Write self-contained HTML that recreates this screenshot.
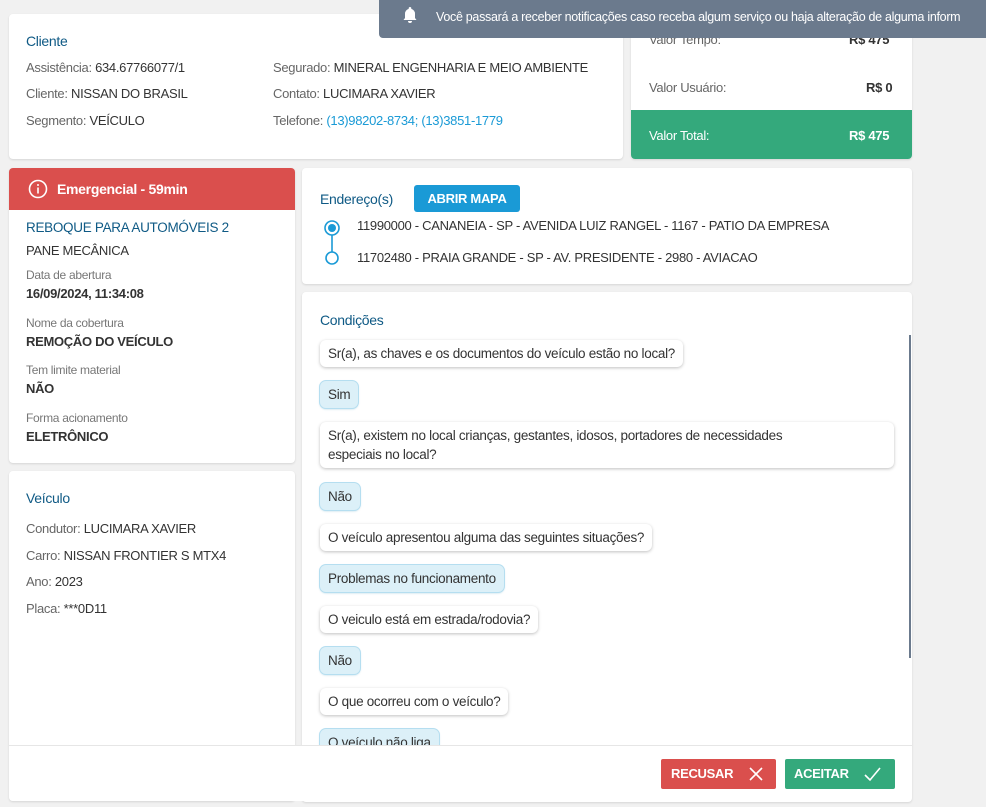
<!DOCTYPE html>
<html><head><meta charset="utf-8"><style>
*{margin:0;padding:0;box-sizing:border-box}
body{width:986px;height:807px;background:#f1f1f1;font-family:"Liberation Sans",sans-serif;font-size:13px;color:#333;position:relative;overflow:hidden;letter-spacing:-0.3px}
.a{position:absolute;white-space:nowrap}
.card{position:absolute;background:#fff;border-radius:4px;box-shadow:0 1px 2px rgba(0,0,0,.12)}
.lbl{color:#666}
.ttl{color:#0f5a85;font-size:14px}
.bub{position:absolute;background:#fff;border-radius:6px;box-shadow:0 1px 3px rgba(0,0,0,.25);padding:0 8px;line-height:27px;height:27px;white-space:nowrap;font-size:13.5px;color:#333}
.ans{background:#dcf0f8;box-shadow:0 0 0 1px #b5def0,0 1px 2px rgba(60,150,190,.4)}
.sm{font-size:12px;color:#777}
.b{font-weight:bold;color:#333}
</style></head><body>

<div class="card" style="left:9px;top:14px;width:614px;height:145px"></div>
<div class="a ttl" style="left:26px;top:33px">Cliente</div>
<div class="a" style="left:26px;top:60px"><span class="lbl">Assistência:</span> 634.67766077/1</div>
<div class="a" style="left:26px;top:86px"><span class="lbl">Cliente:</span> NISSAN DO BRASIL</div>
<div class="a" style="left:26px;top:113px"><span class="lbl">Segmento:</span> VEÍCULO</div>
<div class="a" style="left:273px;top:60px"><span class="lbl">Segurado:</span> MINERAL ENGENHARIA E MEIO AMBIENTE</div>
<div class="a" style="left:273px;top:86px"><span class="lbl">Contato:</span> LUCIMARA XAVIER</div>
<div class="a" style="left:273px;top:113px"><span class="lbl">Telefone:</span> <span style="color:#1a9ad6">(13)98202-8734; (13)3851-1779</span></div>

<div class="card" style="left:631px;top:14px;width:281px;height:145px;overflow:hidden">
<div style="position:absolute;left:0;top:96px;width:281px;height:49px;background:#34a97c"></div></div>
<div class="a lbl" style="left:649px;top:32px">Valor Tempo:</div>
<div class="a b" style="left:849px;top:32px">R$ 475</div>
<div class="a lbl" style="left:649px;top:80px">Valor Usuário:</div>
<div class="a b" style="left:866px;top:80px">R$ 0</div>
<div class="a" style="left:649px;top:128px;color:#fff">Valor Total:</div>
<div class="a" style="left:849px;top:128px;color:#fff;font-weight:bold">R$ 475</div>

<div class="a" style="left:379px;top:0;width:607px;height:38px;background:#6b7a8d;border-radius:0 0 0 4px;overflow:hidden">
<div class="a" style="left:57px;top:10px;color:#fff;font-size:12.5px;letter-spacing:-0.3px">Você passará a receber notificações caso receba algum serviço ou haja alteração de alguma inform</div></div>
<svg class="a" style="left:402px;top:6px" width="16" height="18" viewBox="0 0 16 18"><path d="M8 1a1.3 1.3 0 0 1 1.3 1.3v.6A5 5 0 0 1 13 8v4l1.5 2H1.5L3 12V8a5 5 0 0 1 3.7-5.1v-.6A1.3 1.3 0 0 1 8 1zM6 15h4a2 2 0 0 1-4 0z" fill="#fff"/></svg>

<div class="card" style="left:9px;top:168px;width:286px;height:295px;overflow:hidden">
<div style="height:42px;background:#da4f4d"></div></div>
<svg class="a" style="left:28px;top:179px" width="20" height="20" viewBox="0 0 20 20"><circle cx="10" cy="10" r="8.5" fill="none" stroke="#fff" stroke-width="1.6"/><rect x="9.2" y="8.5" width="1.6" height="6" fill="#fff"/><circle cx="10" cy="6" r="1" fill="#fff"/></svg>
<div class="a" style="left:57px;top:181px;color:#fff;font-weight:bold;font-size:14px">Emergencial - 59min</div>
<div class="a ttl" style="left:26px;top:220px;font-size:13.5px">REBOQUE PARA AUTOMÓVEIS 2</div>
<div class="a" style="left:26px;top:243px">PANE MECÂNICA</div>
<div class="a sm" style="left:26px;top:268px">Data de abertura</div>
<div class="a b" style="left:26px;top:286px">16/09/2024, 11:34:08</div>
<div class="a sm" style="left:26px;top:316px">Nome da cobertura</div>
<div class="a b" style="left:26px;top:334px">REMOÇÃO DO VEÍCULO</div>
<div class="a sm" style="left:26px;top:363px">Tem limite material</div>
<div class="a b" style="left:26px;top:381px">NÃO</div>
<div class="a sm" style="left:26px;top:411px">Forma acionamento</div>
<div class="a b" style="left:26px;top:429px">ELETRÔNICO</div>

<div class="card" style="left:9px;top:471px;width:286px;height:330px"></div>
<div class="a ttl" style="left:26px;top:490px">Veículo</div>
<div class="a" style="left:26px;top:521px"><span class="lbl">Condutor:</span> LUCIMARA XAVIER</div>
<div class="a" style="left:26px;top:548px"><span class="lbl">Carro:</span> NISSAN FRONTIER S MTX4</div>
<div class="a" style="left:26px;top:574px"><span class="lbl">Ano:</span> 2023</div>
<div class="a" style="left:26px;top:601px"><span class="lbl">Placa:</span> ***0D11</div>

<div class="card" style="left:302px;top:168px;width:610px;height:116px"></div>
<div class="a ttl" style="left:320px;top:191px">Endereço(s)</div>
<div class="a" style="left:414px;top:185px;width:106px;height:27px;background:#1a9ad6;border-radius:3px;color:#fff;font-weight:bold;text-align:center;line-height:27px">ABRIR MAPA</div>
<svg class="a" style="left:321px;top:215px" width="24" height="54" viewBox="0 0 24 54"><circle cx="11" cy="13" r="7" fill="none" stroke="#1a9ad6" stroke-width="1.6"/><circle cx="11" cy="13" r="4" fill="#1a9ad6"/><line x1="11" y1="20" x2="11" y2="37" stroke="#1a9ad6" stroke-width="1.6"/><circle cx="11" cy="43" r="6" fill="none" stroke="#1a9ad6" stroke-width="1.6"/></svg>
<div class="a" style="left:357px;top:218px">11990000 - CANANEIA - SP - AVENIDA LUIZ RANGEL - 1167 - PATIO DA EMPRESA</div>
<div class="a" style="left:357px;top:250px">11702480 - PRAIA GRANDE - SP - AV. PRESIDENTE - 2980 - AVIACAO</div>

<div class="card" style="left:302px;top:292px;width:610px;height:510px;overflow:hidden">
<div class="a ttl" style="left:18px;top:20px">Condições</div>
<div class="bub" style="left:18px;top:48px">Sr(a), as chaves e os documentos do veículo estão no local?</div>
<div class="bub ans" style="left:18px;top:89px">Sim</div>
<div class="bub" style="left:18px;top:130px;width:574px;height:46px;line-height:19px;padding-top:4px;padding-right:60px;white-space:normal">Sr(a), existem no local crianças, gestantes, idosos, portadores de necessidades especiais no local?</div>
<div class="bub ans" style="left:18px;top:191px">Não</div>
<div class="bub" style="left:18px;top:232px">O veículo apresentou alguma das seguintes situações?</div>
<div class="bub ans" style="left:18px;top:273px">Problemas no funcionamento</div>
<div class="bub" style="left:18px;top:314px">O veiculo está em estrada/rodovia?</div>
<div class="bub ans" style="left:18px;top:355px">Não</div>
<div class="bub" style="left:18px;top:396px">O que ocorreu com o veículo?</div>
<div class="bub ans" style="left:18px;top:437px">O veículo não liga</div>
</div>
<div class="a" style="left:909px;top:335px;width:2px;height:323px;background:#6b7a8d"></div>

<div class="a" style="left:9px;top:745px;width:903px;height:56px;background:#fff;border-top:1px solid #e6e6e6;border-radius:0 0 4px 4px"></div>
<div class="a" style="left:661px;top:759px;width:115px;height:30px;background:#da4f4d;border-radius:2px;color:#fff;font-weight:bold;line-height:30px;padding-left:10px">RECUSAR</div>
<svg class="a" style="left:748px;top:766px" width="16" height="16" viewBox="0 0 16 16"><path d="M2 2L14 14M14 2L2 14" stroke="#fff" stroke-width="1.6"/></svg>
<div class="a" style="left:785px;top:759px;width:110px;height:30px;background:#34a97c;border-radius:2px;color:#fff;font-weight:bold;line-height:30px;padding-left:9px">ACEITAR</div>
<svg class="a" style="left:863px;top:766px" width="18" height="16" viewBox="0 0 18 16"><path d="M2 9L7 14L17 2" fill="none" stroke="#fff" stroke-width="1.6"/></svg>
</body></html>
